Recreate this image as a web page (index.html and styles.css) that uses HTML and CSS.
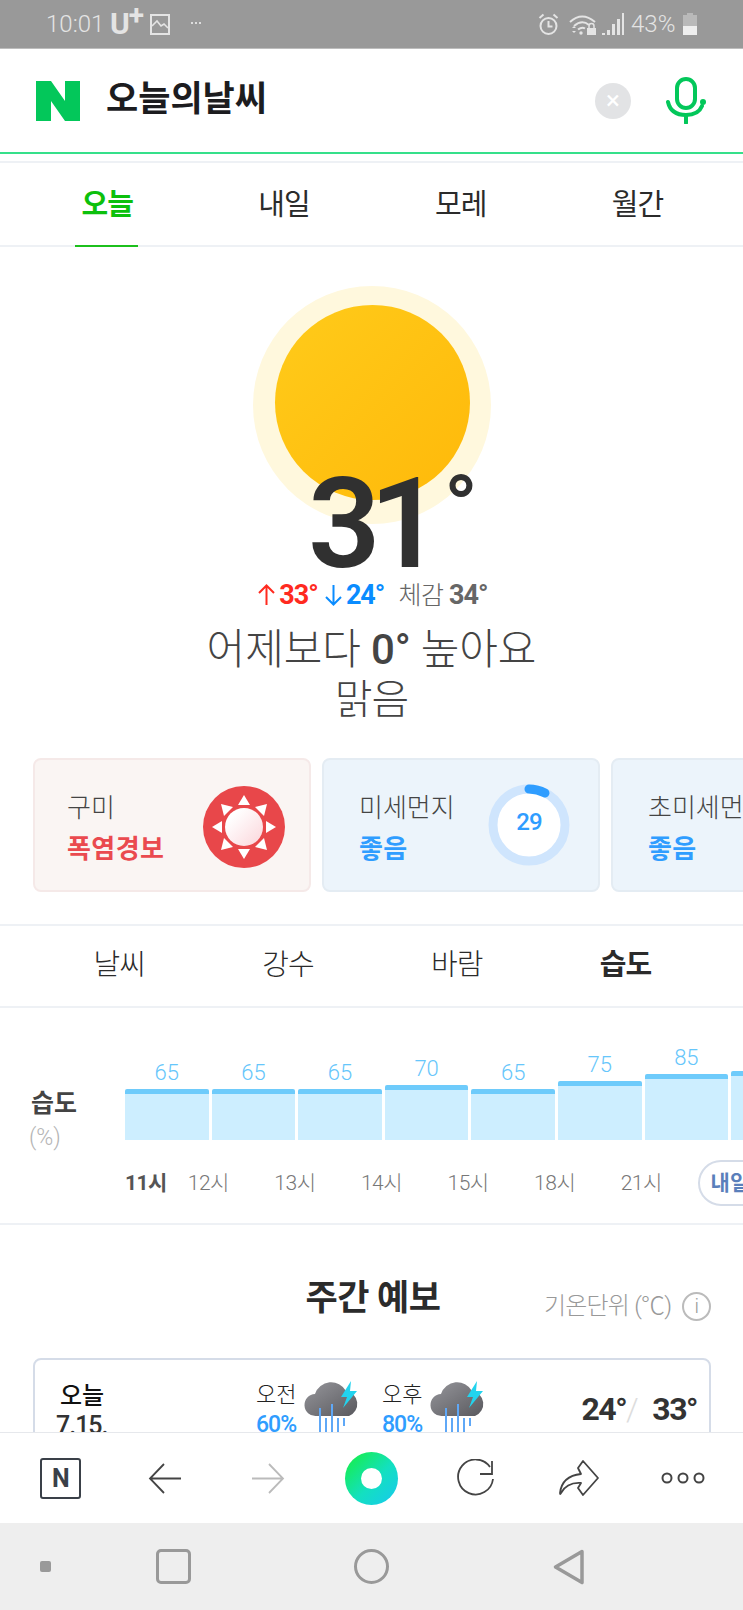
FILE: index.html
```html
<!DOCTYPE html>
<html lang="ko">
<head>
<meta charset="utf-8">
<title>오늘의날씨</title>
<link rel="stylesheet" href="styles.css">
</head>
<body>
<div class="app">
  <div class="status">
    <div class="status-left">
      <span class="clock">10:01</span>
      <span class="carrier">U<sup>+</sup></span>
      <svg class="ic-pic" viewBox="0 0 20 21"><rect x="1" y="1" width="18" height="19" fill="none" stroke="#e4e4e4" stroke-width="2"/><path d="M2 12l5-5 4 5 3-2 4 4" fill="none" stroke="#e4e4e4" stroke-width="1.6"/></svg>
      <span class="more"><i></i><i></i><i></i></span>
    </div>
    <div class="status-right">
      <svg class="ic-alarm" viewBox="0 0 21 22"><circle cx="10.5" cy="13" r="8" fill="none" stroke="#e4e4e4" stroke-width="2"/><path d="M10.500 8v5.500h4M1.500 5l4-3.500M19.500 5l-4-3.500" fill="none" stroke="#e4e4e4" stroke-width="2"/></svg>
      <svg class="ic-wifi" viewBox="0 0 27 22"><path d="M1 9Q13-2 26 9M5 13q8-7 15-1M9 16.500q4-3 7-1" fill="none" stroke="#e4e4e4" stroke-width="2"/><path d="M3 15l2-2 2 2zM3 18l2 2 2-2z" fill="#e4e4e4"/><circle cx="12" cy="20" r="1.700" fill="#e4e4e4"/><rect x="18" y="15" width="9" height="7" fill="#e4e4e4"/><path d="M20 15v-2a2.500 2.500 0 0 1 5 0v2" fill="none" stroke="#e4e4e4" stroke-width="1.500"/></svg>
      <svg class="ic-signal" viewBox="0 0 22 22"><path d="M0 22v-2h3v2zM5 22v-5h3v5zM10 22V11h3v11zM15 22V6h3v16zM20 22V0h2v22z" fill="#e4e4e4"/></svg>
      <span class="batt-text">43%</span>
      <span class="battery"><span class="battery-fill"></span></span>
    </div>
  </div>

  <header class="search">
    <svg class="logo" viewBox="0 0 44 40"><path d="M0 0h15l14 20V0h15v40H29L15 20v20H0z" fill="#03c75a"/></svg>
    <div class="query">오늘의날씨</div>
    <span class="clear">×</span>
    <svg class="mic" viewBox="0 0 40 47"><rect x="11" y="2" width="18" height="29" rx="9" fill="none" stroke="#03c75a" stroke-width="4"/><path d="M2 25c2 9 9 13 18 13s14-4 16-9" fill="none" stroke="#03c75a" stroke-width="4" stroke-linecap="round"/><circle cx="37" cy="25" r="3" fill="#03c75a"/><path d="M20 38v8" stroke="#03c75a" stroke-width="4" stroke-linecap="round"/></svg>
  </header>

  <nav class="day-tabs">
    <span class="day-tab is-on">오늘</span>
    <span class="day-tab">내일</span>
    <span class="day-tab">모레</span>
    <span class="day-tab">월간</span>
  </nav>

  <main class="content">
    <section class="hero">
      <div class="sun"><div class="sun-core"></div></div>
      <div class="temp">31<span class="deg">°</span></div>
      <div class="minmax">
        <span class="up"><svg class="arrow" viewBox="0 0 17 22"><path d="M8.500 21V2M1 9l7.500-7.500L16 9" fill="none" stroke="#ff2a1f" stroke-width="2"/></svg>33°</span>
        <span class="down"><svg class="arrow" viewBox="0 0 17 22"><path d="M8.500 1v19M1 13l7.500 7.500L16 13" fill="none" stroke="#0a8cff" stroke-width="2"/></svg>24°</span>
        <span class="feel"><b>체감</b> 34°</span>
      </div>
      <div class="compare">어제보다 <strong>0°</strong> 높아요</div>
      <div class="cond">맑음</div>
    </section>

    <section class="cards">
      <div class="card card-red">
        <div class="card-text"><div class="card-name">구미</div><div class="card-val red">폭염경보</div></div>
        <svg class="card-ic" viewBox="0 0 82 82">
          <defs><linearGradient id="hot" x1="0" y1="0" x2="1" y2="1"><stop offset="0.2" stop-color="#fff"/><stop offset="1" stop-color="#fbd5da"/></linearGradient></defs>
          <circle cx="41" cy="41" r="41" fill="#e8474a"/>
          <circle cx="41" cy="41" r="19" fill="url(#hot)"/>
          <g fill="#fff">
            <path d="M41 9l6 10H35z"/><path d="M41 73l-6-10h12z"/><path d="M9 41l10-6v12z"/><path d="M73 41l-10 6V35z"/>
            <path d="M18 18l12 3-9 9z"/><path d="M64 18l-3 12-9-9z"/><path d="M18 64l3-12 9 9z"/><path d="M64 64l-12-3 9-9z"/>
          </g>
        </svg>
      </div>
      <div class="card card-blue">
        <div class="card-text"><div class="card-name">미세먼지</div><div class="card-val blue">좋음</div></div>
        <div class="ring-wrap">
          <svg class="ring" viewBox="0 0 82 82"><circle cx="41" cy="41" r="36" fill="#fff" stroke="#cfe5fd" stroke-width="9"/><path d="M41 5a36 36 0 0 1 16 4" fill="none" stroke="#2f9dff" stroke-width="9" stroke-linecap="round"/></svg>
          <span class="ring-num">29</span>
        </div>
      </div>
      <div class="card card-blue">
        <div class="card-text"><div class="card-name nowrap">초미세먼지</div><div class="card-val blue">좋음</div></div>
      </div>
    </section>

    <nav class="kind-tabs">
      <span class="kind-tab">날씨</span>
      <span class="kind-tab">강수</span>
      <span class="kind-tab">바람</span>
      <span class="kind-tab is-on">습도</span>
    </nav>

    <section class="graph">
      <div class="graph-label"><div class="graph-title">습도</div><div class="graph-unit">(%)</div></div>
      <div class="graph-plot">
        <div class="bars">
          <div class="bar"><span class="bar-num">65</span><div class="bar-fill" style="height:51px"></div></div>
          <div class="bar"><span class="bar-num">65</span><div class="bar-fill" style="height:51px"></div></div>
          <div class="bar"><span class="bar-num">65</span><div class="bar-fill" style="height:51px"></div></div>
          <div class="bar"><span class="bar-num">70</span><div class="bar-fill" style="height:55px"></div></div>
          <div class="bar"><span class="bar-num">65</span><div class="bar-fill" style="height:51px"></div></div>
          <div class="bar"><span class="bar-num">75</span><div class="bar-fill" style="height:59px"></div></div>
          <div class="bar"><span class="bar-num">85</span><div class="bar-fill" style="height:66px"></div></div>
          <div class="bar"><span class="bar-num">90</span><div class="bar-fill" style="height:69px"></div></div>
        </div>
        <div class="hours">
          <span class="hour hour-now">11시</span>
          <span class="hour">12시</span>
          <span class="hour">13시</span>
          <span class="hour">14시</span>
          <span class="hour">15시</span>
          <span class="hour">18시</span>
          <span class="hour">21시</span>
          <span class="next-day">내일</span>
        </div>
      </div>
    </section>

    <section class="week">
      <div class="week-head">
        <h2 class="week-title">주간 예보</h2>
        <div class="week-unit">기온단위 (℃) <span class="info">i</span></div>
      </div>
      <div class="week-card">
        <div class="wk-day"><div class="wk-name">오늘</div><div class="wk-date">7.15.</div></div>
        <div class="wk-part">
          <div class="wk-txt"><div class="wk-ampm">오전</div><div class="wk-rain">60%</div></div>
          <svg class="storm" viewBox="0 0 56 56">
            <defs><linearGradient id="cl" x1="0" y1="0" x2="1" y2="1"><stop offset="0" stop-color="#96969b"/><stop offset="1" stop-color="#59595e"/></linearGradient></defs>
            <path d="M12 36a11 11 0 0 1-1-22 17 17 0 0 1 31-3 13 13 0 0 1 3 25z" fill="url(#cl)"/>
            <path d="M47 1L37 17l6 0-4 11 14-17-7 0z" fill="#22d3ee"/>
            <path d="M16 28v26M28 24v32M22 38v18M34 38v18M40 38v8" stroke="#5fa8f7" stroke-width="2"/>
          </svg>
        </div>
        <div class="wk-part">
          <div class="wk-txt"><div class="wk-ampm">오후</div><div class="wk-rain">80%</div></div>
          <svg class="storm" viewBox="0 0 56 56">
            <path d="M12 36a11 11 0 0 1-1-22 17 17 0 0 1 31-3 13 13 0 0 1 3 25z" fill="url(#cl)"/>
            <path d="M47 1L37 17l6 0-4 11 14-17-7 0z" fill="#22d3ee"/>
            <path d="M16 28v26M28 24v32M22 38v18M34 38v18M40 38v8" stroke="#5fa8f7" stroke-width="2"/>
          </svg>
        </div>
        <div class="wk-temp">24°<span class="slash">/</span>33°</div>
      </div>
    </section>
  </main>

  <div class="toolbar">
    <span class="tb-n">N</span>
    <svg class="tb-back" viewBox="0 0 33 31"><path d="M16 1L2 15.500 16 30M2 15.500h31" fill="none" stroke="#444" stroke-width="1.800"/></svg>
    <svg class="tb-back" viewBox="0 0 33 31"><path d="M17 1l14 14.500L17 30M31 15.500H0" fill="none" stroke="#bbb" stroke-width="1.800"/></svg>
    <span class="tb-green"><span class="tb-hole"></span></span>
    <svg class="tb-reload" viewBox="0 0 38 38"><path d="M33 8A17.500 17.500 0 1 0 36 20M35 2v13H23" fill="none" stroke="#444" stroke-width="1.800"/></svg>
    <svg class="tb-share" viewBox="0 0 40 36"><path d="M24 1l15 17-15 17-5-7 3-5q-14-1-20 10-1 2-1 0 2-17 21-19l-3-6z" fill="none" stroke="#444" stroke-width="1.800" stroke-linejoin="round"/></svg>
    <svg class="tb-more" viewBox="0 0 44 12"><g fill="none" stroke="#444" stroke-width="2"><circle cx="6" cy="6" r="4.500"/><circle cx="22" cy="6" r="4.500"/><circle cx="38" cy="6" r="4.500"/></g></svg>
  </div>

  <div class="sysnav">
    <span class="sys-dot"></span>
    <span class="sys-rect"></span>
    <span class="sys-circle"></span>
    <svg class="sys-back" viewBox="0 0 32 36"><path d="M29 2.500L2.500 18 29 33.500z" fill="none" stroke="#999" stroke-width="3.500" stroke-linejoin="round"/></svg>
  </div>
</div>
</body>
</html>
```
FILE: styles.css
```css
* { box-sizing: border-box; }
html, body { margin: 0; padding: 0; background: #fff; }
body { font-family: Roboto, "Noto Sans CJK KR", sans-serif; color: #2b2b2b; }

.app { width: 743px; height: 1610px; display: flex; flex-direction: column; overflow: hidden; }

/* status bar */
.status { height: 49px; flex: none; background: #999; border-bottom: 1px solid #bdbdbd; display: flex; justify-content: space-between; align-items: center; color: #e4e4e4; padding: 0 46px 0 46px; }
.status-left, .status-right { display: flex; align-items: center; }
.clock { font-size: 24px; font-weight: 300; width: 64px; }
.carrier { font-size: 30px; font-weight: 700; width: 40px; line-height: 30px; }
.carrier sup { font-size: 28px; line-height: 0; vertical-align: 9px; margin-left: -1px; }
.ic-pic { width: 20px; height: 21px; }
.more { display: flex; gap: 2px; margin-left: 21px; margin-top: -2px; }
.more i { width: 2px; height: 2px; background: #ddd; display: block; }
.ic-alarm { width: 21px; height: 22px; }
.ic-wifi { width: 27px; height: 22px; margin-left: 10px; }
.ic-signal { width: 22px; height: 22px; margin-left: 6px; }
.batt-text { font-size: 24px; font-weight: 300; margin-left: 7px; width: 52px; white-space: nowrap; }
.battery { width: 14px; height: 20px; background: #b9b9b9; position: relative; display: block; margin-top: 2px; }
.battery::before { content: ""; position: absolute; left: 4px; top: -2px; width: 6px; height: 2px; background: #b9b9b9; }
.battery-fill { display: block; height: 9px; background: #eee; position: absolute; left: 0; right: 0; bottom: 0; }

/* search header */
.search { height: 105px; flex: none; border-bottom: 2px solid #35e08a; display: flex; align-items: center; padding: 0 37px 0 36px; }
.logo { width: 44px; height: 40px; flex: none; }
.query { font-size: 35px; line-height: 46px; margin-top: -2px; font-weight: 700; color: #1c1c1f; margin-left: 26px; flex: 1; }
.clear { width: 36px; height: 36px; border-radius: 50%; background: #e2e3e5; color: #fff; font-size: 26px; line-height: 34px; text-align: center; flex: none; }
.mic { width: 40px; height: 47px; margin-left: 35px; flex: none; }

/* day tabs */
.day-tabs { margin-top: 7px; height: 86px; flex: none; display: flex; border-top: 2px solid #eef1f5; border-bottom: 2px solid #eef1f5; padding: 0 17px 0 19px; }
.day-tab { flex: 1; text-align: center; font-size: 29px; line-height: 84px; letter-spacing: -0.700px; color: #2b2b2b; position: relative; }
.day-tab.is-on { color: #0cc00c; font-weight: 700; }
.day-tab.is-on::after { content: ""; position: absolute; left: 56px; width: 63px; bottom: -2px; height: 2px; background: #1cc01c; }

.content { flex: 1; min-height: 0; overflow: hidden; }

/* hero */
.hero { height: 511px; position: relative; text-align: center; }
.sun { position: absolute; left: 253px; top: 39px; width: 238px; height: 238px; border-radius: 50%; background: #fff8dd; display: flex; justify-content: center; padding-top: 19px; }
.sun-core { width: 195px; height: 195px; border-radius: 50%; background: linear-gradient(135deg, #ffcb1a, #ffb90a); }
.temp { position: relative; padding-top: 212px; font-size: 127px; line-height: 130px; font-weight: 600; color: #303030; letter-spacing: -11px; height: 334px; margin-left: 43px; }
.deg { font-size: 88px; font-weight: 600; line-height: 0; vertical-align: 30px; letter-spacing: 0; margin-left: 13px; }
.minmax { position: relative; display: flex; justify-content: center; align-items: center; font-size: 27px; line-height: 32px; font-weight: 700; letter-spacing: -1px; height: 32px; margin: -2px 0 0 3px; }
.arrow { width: 17px; height: 22px; margin-right: 4px; vertical-align: -2px; }
.up { color: #ff2a1f; }
.down { color: #0a8cff; margin-left: 7px; }
.feel { color: #666; margin-left: 14px; }
.feel b { font-weight: 300; font-size: 25px; letter-spacing: -0.500px; }
.compare { font-size: 42px; line-height: 50px; font-weight: 300; color: #444; margin-top: 14px; letter-spacing: -0.100px; }
.compare strong { font-weight: 500; }
.cond { font-size: 41px; line-height: 50px; font-weight: 300; letter-spacing: -1px; color: #444; }

/* cards */
.cards { display: flex; gap: 11px; padding-left: 33px; height: 166px; }
.card { width: 278px; height: 134px; flex: none; border-radius: 8px; border: 2px solid; display: flex; justify-content: space-between; padding: 0 24px 0 32px; align-items: center; }
.card-red { background: #faf5f3; border-color: #f5e9e8; }
.card-blue { background: #ecf4fb; border-color: #e4ecf3; padding-left: 35px; padding-right: 28px; }
.card-text { padding-top: 7px; }
.card-name { font-size: 26px; line-height: 36px; color: #444; font-weight: 300; }
.card-val { font-size: 26px; line-height: 38px; margin-top: 4px; font-weight: 700; letter-spacing: 0.400px; }
.nowrap { white-space: nowrap; }
.red { color: #ea4a4f; }
.blue { color: #2f9dff; }
.card-ic { width: 82px; height: 82px; flex: none; margin-top: 4px; }
.ring-wrap { width: 82px; height: 82px; position: relative; flex: none; }
.ring { width: 82px; height: 82px; display: block; }
.ring-num { position: absolute; left: 0; right: 0; top: 24px; text-align: center; font-size: 24px; line-height: 28px; font-weight: 500; color: #2f9dff; letter-spacing: -1px; }

/* kinds */
.kind-tabs { height: 84px; display: flex; border-top: 2px solid #eef1f5; border-bottom: 2px solid #eef1f5; padding: 0 33px 0 35px; }
.kind-tab { width: 169px; text-align: center; font-size: 29px; line-height: 78px; letter-spacing: -0.700px; color: #2b2b2b; font-weight: 300; }
.kind-tab.is-on { font-weight: 700; }

/* graph */
.graph { height: 217px; display: flex; border-bottom: 2px solid #eef1f5; padding-left: 29px; position: relative; }
.graph-label { width: 96px; flex: none; padding-top: 79px; }
.graph-title { font-size: 25px; line-height: 34px; font-weight: 700; color: #444; margin-left: 2px; }
.graph-unit { font-size: 23px; line-height: 30px; font-weight: 300; color: #b5b5b5; margin-top: 2px; }
.graph-plot { flex: none; width: 720px; }
.bars { display: flex; gap: 3px; height: 132px; align-items: flex-end; }
.bar { width: 83.600px; flex: none; display: flex; flex-direction: column; align-items: center; justify-content: flex-end; }
.bar-num { font-size: 22px; line-height: 24px; font-weight: 300; color: #66c6fb; margin-bottom: 4px; }
.bar-fill { width: 100%; background: #cdeeff; border-top: 5px solid #6ecbfb; border-radius: 2px 2px 0 0; }
.hours { display: flex; align-items: center; height: 46px; margin-top: 20px; }
.hour { width: 86.600px; flex: none; text-align: center; font-size: 21px; line-height: 46px; font-weight: 300; color: #777; letter-spacing: -0.500px; white-space: nowrap; }
.hour-now { width: 40px; text-align: left; font-weight: 700; color: #555; }
.next-day { margin-left: 13px; flex: none; width: 80px; height: 46px; border: 2px solid #d5dce8; border-radius: 23px; font-size: 21px; line-height: 42px; color: #5a7fbb; font-weight: 700; padding-left: 11px; }

/* week */
.week { position: relative; }
.week-head { height: 133px; position: relative; text-align: center; }
.week-title { margin: 0; padding: 51px 0 0 3px; font-size: 35px; line-height: 46px; font-weight: 700; letter-spacing: -0.500px; color: #2b2b2b; }
.week-unit { position: absolute; left: 544px; top: 65px; white-space: nowrap; font-size: 24px; line-height: 32px; font-weight: 300; color: #999; letter-spacing: -0.800px; display: flex; align-items: center; gap: 11px; }
.info { width: 29px; height: 29px; border: 2px solid #bbb; border-radius: 50%; display: block; text-align: center; line-height: 25px; font-size: 20px; letter-spacing: 0; }
.week-card { margin: 0 32px 0 33px; height: 140px; border: 2px solid #d5dce8; border-radius: 8px; display: flex; padding-top: 20px; align-items: flex-start; }
.wk-day { width: 221px; padding-left: 21px; flex: none; }
.wk-name { font-size: 24px; line-height: 32px; font-weight: 500; color: #111; text-align: left; padding-left: 4px; }
.wk-date { font-size: 25px; line-height: 28px; font-weight: 500; color: #333; letter-spacing: -1px; }
.wk-part { display: flex; width: 126px; flex: none; }
.wk-txt { width: 48px; flex: none; }
.wk-ampm { font-size: 22px; line-height: 30px; font-weight: 300; color: #222; }
.wk-rain { font-size: 23px; line-height: 30px; font-weight: 500; color: #2f9dff; letter-spacing: -1px; }
.storm { width: 56px; height: 56px; flex: none; }
.wk-temp { flex: 1; font-size: 32px; line-height: 36px; font-weight: 700; letter-spacing: -1.500px; color: #333; margin-top: 11px; white-space: nowrap; text-align: right; padding-right: 12px; }
.slash { color: #ddd; font-weight: 300; margin: 0 15px 0 0; }

/* toolbar */
.toolbar { height: 91px; flex: none; background: #fff; border-top: 1px solid #e6e8ec; display: grid; grid-template-columns: repeat(7, 103.700px); justify-items: center; align-items: center; padding-left: 9px; }
.tb-n { width: 41px; height: 41px; border: 2px solid #3a4048; border-radius: 3px; text-align: center; font-weight: 700; font-size: 25px; line-height: 37px; color: #3a4048; }
.tb-back { width: 33px; height: 31px; }
.tb-reload { width: 38px; height: 38px; }
.tb-share { width: 40px; height: 36px; }
.tb-more { width: 44px; height: 12px; }
.tb-green { width: 53px; height: 53px; border-radius: 50%; background: linear-gradient(135deg, #17f03a, #13e0c0 55%, #17c8f0); display: flex; align-items: center; justify-content: center; }
.tb-hole { width: 21px; height: 21px; border-radius: 50%; background: #fff; display: block; }

/* system nav */
.sysnav { height: 87px; flex: none; background: #eee; display: flex; align-items: center; padding-left: 40px; }
.sys-dot { width: 11px; height: 11px; background: #999; border-radius: 2px; }
.sys-rect { width: 35px; height: 35px; border: 3px solid #999; border-radius: 5px; margin-left: 105px; }
.sys-circle { width: 35px; height: 35px; border: 3px solid #999; border-radius: 50%; margin-left: 163px; }
.sys-back { width: 32px; height: 36px; margin-left: 164px; }
```
